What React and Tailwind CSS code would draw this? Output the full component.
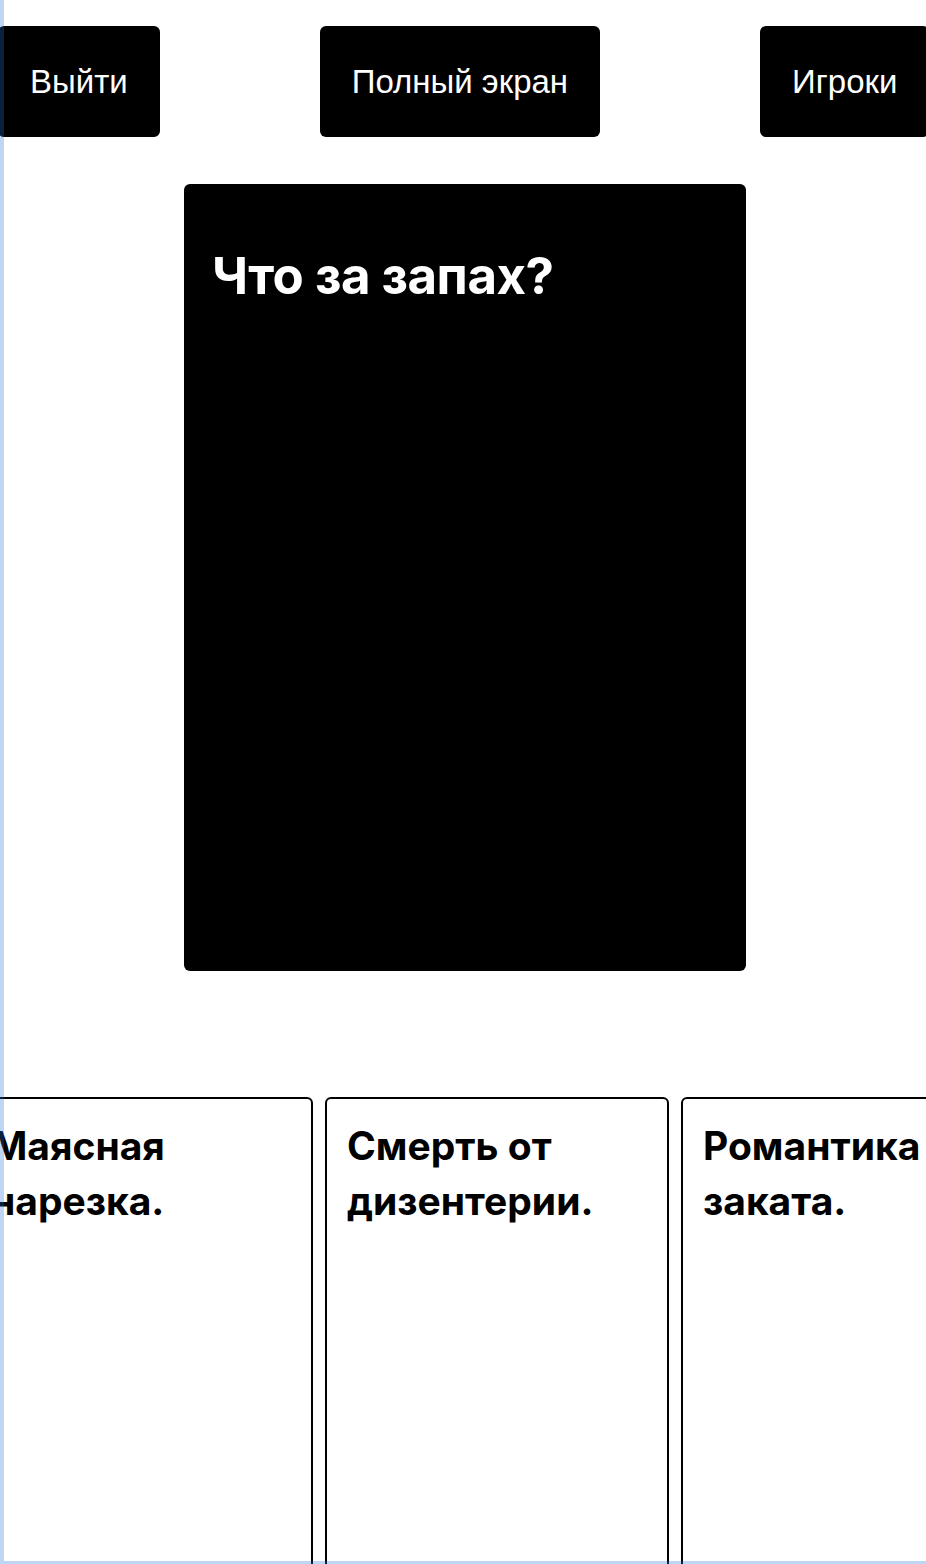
import React from "react";

const answers = ["Маясная нарезка.", "Смерть от дизентерии.", "Романтика заката."];

export default function App() {
  return (
    <div className="relative h-[1564px] w-[926px] overflow-hidden bg-white">
      <div className="ml-[-2px] w-[934px]">
        <div className="flex gap-[160px] pt-[26px]">
          {["Выйти", "Полный экран", "Игроки"].map((t) => (
            <button
              key={t}
              className="shrink-0 rounded-md bg-black px-8 py-9 text-[33px] leading-[39px] text-white whitespace-nowrap"
              style={{ fontFamily: '"Liberation Sans", Arial, sans-serif' }}
            >
              {t}
            </button>
          ))}
        </div>
        <div className="mt-[47px] flex justify-center">
          <div
            className="h-[787px] w-[562px] rounded-md bg-black px-7 pt-[61px]"
            style={{ fontFamily: 'Inter, "Noto Sans", sans-serif' }}
          >
            <h1 className="text-[51px] font-bold leading-[62px] tracking-[-0.01em] text-white">
              Что за запах?
            </h1>
          </div>
        </div>
      </div>
      <div className="ml-[-31px] mt-[126px] flex gap-3">
        {answers.map((a) => (
          <div
            key={a}
            className="h-[500px] w-[344px] shrink-0 rounded-md border-2 border-black bg-white px-5 pt-[19px]"
            style={{ fontFamily: 'Inter, "Noto Sans", sans-serif' }}
          >
            <p className="text-[39px] font-bold leading-[55px] text-black">{a}</p>
          </div>
        ))}
      </div>
      <div className="pointer-events-none absolute inset-0 border-b-[3px] border-l-4 border-[rgba(34,109,218,0.29)]" />
    </div>
  );
}
